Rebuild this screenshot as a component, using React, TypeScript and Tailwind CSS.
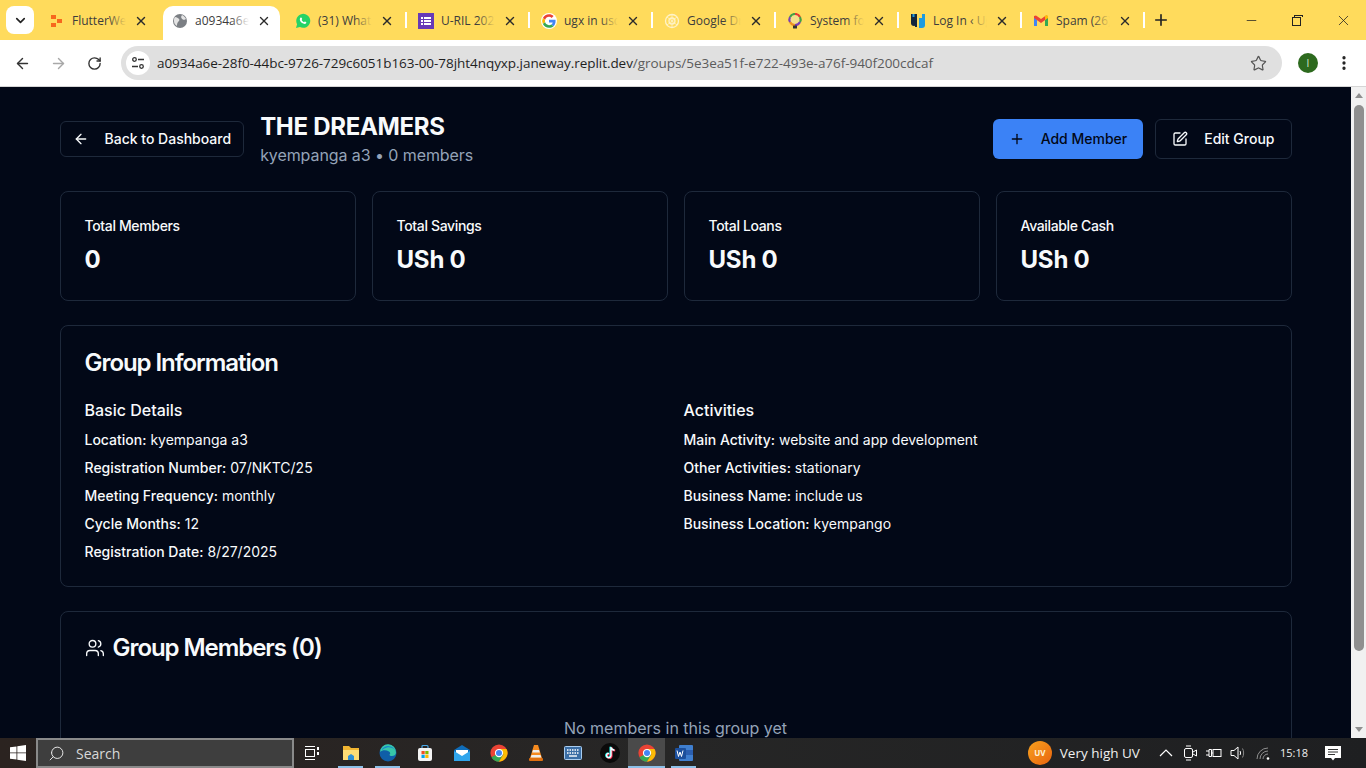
import React from "react";
import { ArrowLeft, ArrowRight, RotateCw, Star, Plus, SquarePen, Users, X, ChevronDown, Minus, EllipsisVertical, Search } from "lucide-react";

const Sq = ({ children, vb = "0 0 16 16" }: { children: React.ReactNode; vb?: string }) => (
  <svg width="16" height="16" viewBox={vb} className="shrink-0">{children}</svg>
);

const GoogleG = () => (
  <Sq vb="-4 -4 56 56">
    <path fill="#EA4335" d="M24 9.5c3.5 0 6.7 1.2 9.2 3.6l6.9-6.9C35.9 2.4 30.5 0 24 0 14.6 0 6.5 5.4 2.6 13.2l8 6.2C12.5 13.7 17.800 9.500 24 9.500z" />
    <path fill="#4285F4" d="M47 24.500c0-1.600-.1-3.100-.4-4.500H24v9h13c-.6 3-2.200 5.500-4.800 7.200l7.700 6C44.400 38.000 47 31.800 47 24.500z" />
    <path fill="#FBBC05" d="M10.500 28.600A14.500 14.500 0 0 1 10.500 19.400l-8-6.200a24 24 0 0 0 0 21.600z" />
    <path fill="#34A853" d="M24 48c6.500 0 11.900-2.100 15.900-5.800l-7.700-6c-2.200 1.400-4.900 2.300-8.200 2.300-6.200 0-11.500-4.200-13.400-9.900l-8 6.200C6.500 42.600 14.600 48 24 48z" />
  </Sq>
);

const tabIcons: Record<string, React.ReactNode> = {
  flutter: (
    <Sq>
      <rect x="2" y="2" width="5" height="4" fill="#f7671d" />
      <rect x="8" y="6" width="5" height="4" fill="#f7671d" />
      <rect x="2" y="10" width="5" height="4" fill="#f7671d" />
    </Sq>
  ),
  globe: (
    <Sq>
      <circle cx="8" cy="8" r="7" fill="#7b7f84" />
      <path d="M3 4c2 0 3 1 4 2s0 2-1 3-1 3-1 4c-2-1-3-3-3-5 0-2 0-3 1-4zM10 2c2 1 3 2 4 4l-2 1-2-1-1-2z" fill="#e4e4e4" />
    </Sq>
  ),
  whatsapp: (
    <Sq>
      <path d="M1 15l1.100-3.800A7 7 0 1 1 4.900 14z" fill="#25d366" />
      <path d="M5.700 4.500c.5-.3.900 0 1.100.6l.4.900-.6.900c.5 1 1.300 1.800 2.400 2.300l.8-.7 1.300.6c.3.200.3.700 0 1.100-.6.800-1.600.9-2.800.4-1.700-.7-3-2.100-3.400-3.700-.2-1 .1-1.800.8-2.400z" fill="#fff" />
    </Sq>
  ),
  forms: (
    <Sq>
      <rect x="0" y="0" width="16" height="16" fill="#673ab7" />
      <rect x="3" y="4" width="2" height="2" fill="#fff" />
      <rect x="6" y="4" width="7" height="2" fill="#fff" />
      <rect x="3" y="7" width="2" height="2" fill="#fff" />
      <rect x="6" y="7" width="7" height="2" fill="#fff" />
      <rect x="3" y="10" width="2" height="2" fill="#fff" />
      <rect x="6" y="10" width="7" height="2" fill="#fff" />
    </Sq>
  ),
  google: (
    <span className="flex h-4 w-4 items-center justify-center rounded-full bg-white">
      <GoogleG />
    </span>
  ),
  gpt: (
    <Sq>
      <circle cx="8" cy="8" r="6.500" fill="none" stroke="#fff3c8" strokeWidth="1.300" />
      <circle cx="8" cy="8" r="3" fill="none" stroke="#fff3c8" strokeWidth="1.300" />
      <path d="M3 4l10 8M13 4L3 12M8 1v14" stroke="#fff3c8" strokeWidth=".8" />
    </Sq>
  ),
  bulb: (
    <Sq>
      <circle cx="8" cy="6.500" r="5.500" fill="#f4e08a" />
      <path d="M8 1A5.500 5.500 0 0 1 13 4" fill="none" stroke="#e53935" strokeWidth="2.200" />
      <path d="M13 4A5.500 5.500 0 0 1 13 9" fill="none" stroke="#43a047" strokeWidth="2.200" />
      <path d="M13 9A5.500 5.500 0 0 1 8 12" fill="none" stroke="#7b3fb5" strokeWidth="2.200" />
      <path d="M8 12A5.500 5.500 0 0 1 3 9" fill="none" stroke="#f09020" strokeWidth="2.200" />
      <path d="M3 9A5.500 5.500 0 0 1 3 4" fill="none" stroke="#7b3fb5" strokeWidth="2.200" />
      <path d="M3 4A5.500 5.500 0 0 1 8 1" fill="none" stroke="#43a047" strokeWidth="2.200" />
      <rect x="6" y="12.500" width="4" height="3" rx=".5" fill="#333" />
    </Sq>
  ),
  login: (
    <Sq>
      <path d="M1 1h6v9a3 3 0 0 1-6 0z" fill="#14263c" />
      <rect x="5" y="1" width="2" height="13" fill="#14263c" />
      <path d="M9 1h6v11a3 3 0 0 1-3 3h-3z" fill="#1e9be0" />
      <path d="M9 1h3v4H9z" fill="#ffdb5c" />
      <path d="M2.500 1h2v3h-2z" fill="#1e9be0" />
    </Sq>
  ),
  gmail: (
    <Sq>
      <path d="M1 4v9h3V7z" fill="#4285f4" />
      <path d="M12 7v6h3V4z" fill="#34a853" />
      <path d="M1 3v2l7 5 7-5V3l-2-.5L8 6 3 2.500z" fill="#ea4335" />
      <path d="M12 3v4l3-2V3l-1.500-.8z" fill="#fbbc05" />
    </Sq>
  ),
};

const tabs = [
  { icon: "flutter", title: "FlutterWeb" },
  { icon: "globe", title: "a0934a6e-28f0", active: true },
  { icon: "whatsapp", title: "(31) WhatsApp" },
  { icon: "forms", title: "U-RIL 2025 form" },
  { icon: "google", title: "ugx in usd - Google" },
  { icon: "gpt", title: "Google Drive" },
  { icon: "bulb", title: "System for savings" },
  { icon: "login", title: "Log In ‹ Uganda" },
  { icon: "gmail", title: "Spam (26) - mail" },
];

function Tab({ icon, title, active, sep }: { icon: string; title: string; active?: boolean; sep: boolean }) {
  return (
    <div className="relative flex h-[34px] w-[123px] shrink-0 self-end">
      <div className={`flex h-[34px] w-[117px] items-center pb-[5px] pl-[9px] ${active ? "rounded-t-[10px] bg-white" : ""}`}>
        <span className="flex h-4 w-4 shrink-0 items-center justify-center">{tabIcons[icon]}</span>
        <span className="relative ml-[7px] w-[54px] shrink-0 overflow-hidden whitespace-nowrap text-[12px] text-[#3c3c3c]">
          {title}
          <span className={`absolute inset-y-0 right-0 w-[18px] bg-gradient-to-r from-transparent ${active ? "to-white" : "to-[#ffdb5c]"}`} />
        </span>
        <X size={14} strokeWidth={2.4} className="ml-2 shrink-0 text-[#2b2b2b]" />
      </div>
      {sep && <span className="absolute right-[2px] top-[6px] h-[16px] w-[2px] bg-white" />}
    </div>
  );
}

function BrowserChrome() {
  return (
    <div className="shrink-0 font-['Open_Sans',sans-serif]">
      <div className="flex h-10 items-stretch bg-[#ffdb5c]">
        <div className="flex w-[40px] shrink-0 items-start pl-[6px] pt-[6px]">
          <span className="flex h-[28px] w-[28px] items-center justify-center rounded-[8px] bg-white">
            <ChevronDown size={15} strokeWidth={2.6} className="text-[#222]" />
          </span>
        </div>
        {tabs.map((t, i) => (
          <Tab key={i} icon={t.icon} title={t.title} active={t.active} sep={i >= 2} />
        ))}
        <div className="flex h-10 w-[28px] shrink-0 items-center justify-center">
          <Plus size={18} strokeWidth={2.2} className="text-[#222]" />
        </div>
        <div className="ml-auto flex items-center">
          <span className="flex w-[46px] justify-center"><Minus size={15} strokeWidth={1.2} className="text-[#222]" /></span>
          <span className="relative h-[11px] w-[46px]">
            <span className="absolute left-[18px] top-[2px] h-[9px] w-[9px] border border-[#222]" />
            <span className="absolute left-[20px] top-0 h-[2px] w-[9px] border-l border-r border-t border-[#222]" />
          </span>
          <span className="flex w-[46px] justify-center"><X size={17} strokeWidth={1.1} className="text-[#222]" /></span>
        </div>
      </div>
      <div className="flex h-[47px] items-center rounded-t-[9px] border-b border-[#d5d5d5] bg-white">
        <span className="flex w-[44px] justify-center"><ArrowLeft size={17} strokeWidth={2} className="text-[#333]" /></span>
        <span className="flex w-[28px] justify-center"><ArrowRight size={17} strokeWidth={2} className="text-[#a8a8a8]" /></span>
        <span className="flex w-[44px] justify-center"><RotateCw size={15} strokeWidth={2.2} className="text-[#333]" /></span>
        <div className="ml-[5px] flex h-[34px] w-[1161px] items-center rounded-full bg-[#e0e0e0] pl-[5px] pr-[15px]">
          <span className="flex h-[24px] w-[24px] items-center justify-center rounded-full bg-white">
            <svg width="14" height="14" viewBox="0 0 14 14" fill="none" stroke="#333" strokeWidth="1.300">
              <circle cx="3.500" cy="3.500" r="1.800" />
              <path d="M7 3.500h6M1 10.500h6" />
              <circle cx="10.500" cy="10.500" r="1.800" />
            </svg>
          </span>
          <span className="ml-[7px] whitespace-nowrap text-[13.5px] tracking-[-0.05px] text-[#1f1f1f]">
            a0934a6e-28f0-44bc-9726-729c6051b163-00-78jht4nqyxp.janeway.replit.dev
            <span className="text-[#5c5c5c]">/groups/5e3ea51f-e722-493e-a76f-940f200cdcaf</span>
          </span>
          <Star size={17} strokeWidth={1.7} className="ml-auto text-[#555]" />
        </div>
        <span className="ml-[16px] flex h-5 w-5 items-center justify-center rounded-full bg-[#2d6a1e] text-[10px] text-[#d8e8d0]">I</span>
        <EllipsisVertical size={18} strokeWidth={2.4} className="ml-[17px] text-[#222]" />
      </div>
    </div>
  );
}

function Stat({ label, value }: { label: string; value: string }) {
  return (
    <div className="h-[110px] rounded-lg border border-[#1e293b] px-6 pt-6">
      <div className="text-sm font-medium leading-5 tracking-[-0.35px] text-[#f8fafc]">{label}</div>
      <div className="mt-2 text-2xl font-bold leading-8 tracking-[-0.2px] text-[#f8fafc]">{value}</div>
    </div>
  );
}

function Detail({ k, v }: { k: string; v: string }) {
  return (
    <p className="text-sm leading-5 text-[#f8fafc]">
      <span className="font-medium">{k}:</span> {v}
    </p>
  );
}

function Page() {
  return (
    <div className="flex min-h-0 flex-1 bg-[#020817]">
      <div className="min-w-0 flex-1 overflow-hidden font-['Inter',sans-serif]">
        <div className="mx-auto max-w-7xl px-6 pt-6">
          <div className="flex items-center justify-between">
            <div className="flex items-center gap-4">
              <button className="flex h-9 items-center gap-2 rounded-md border border-[#1e293b] pl-3 pr-3 text-sm font-medium text-[#f8fafc]">
                <ArrowLeft size={16} className="mr-2" strokeWidth={2} />
                Back to Dashboard
              </button>
              <div>
                <h1 className="text-2xl font-bold leading-8 tracking-[-0.3px] text-[#f8fafc]">THE DREAMERS</h1>
                <p className="text-base leading-6 tracking-[-0.08px] text-[#94a3b8]">kyempanga a3 • 0 members</p>
              </div>
            </div>
            <div className="flex items-center gap-3">
              <button className="flex h-10 items-center rounded-md bg-[#3b82f6] px-4 text-sm font-medium text-[#020817]">
                <Plus size={16} className="mr-4" strokeWidth={2} />
                Add Member
              </button>
              <button className="flex h-10 items-center rounded-md border border-[#1e293b] px-4 text-sm font-medium text-[#f8fafc]">
                <SquarePen size={16} className="mr-4" strokeWidth={2} />
                Edit Group
              </button>
            </div>
          </div>

          <div className="mt-6 grid grid-cols-4 gap-4">
            <Stat label="Total Members" value="0" />
            <Stat label="Total Savings" value="USh 0" />
            <Stat label="Total Loans" value="USh 0" />
            <Stat label="Available Cash" value="USh 0" />
          </div>

          <div className="mt-6 h-[262px] rounded-lg border border-[#1e293b] p-6">
            <h2 className="text-2xl font-semibold leading-[25px] tracking-[-1.05px] text-[#f8fafc]">Group Information</h2>
            <div className="mt-[21px] grid grid-cols-2 gap-4">
              <div>
                <h3 className="mb-[6px] text-base font-medium leading-7 text-[#f8fafc]">Basic Details</h3>
                <div className="flex flex-col gap-2">
                  <Detail k="Location" v="kyempanga a3" />
                  <Detail k="Registration Number" v="07/NKTC/25" />
                  <Detail k="Meeting Frequency" v="monthly" />
                  <Detail k="Cycle Months" v="12" />
                  <Detail k="Registration Date" v="8/27/2025" />
                </div>
              </div>
              <div>
                <h3 className="mb-[6px] text-base font-medium leading-7 text-[#f8fafc]">Activities</h3>
                <div className="flex flex-col gap-2">
                  <Detail k="Main Activity" v="website and app development" />
                  <Detail k="Other Activities" v="stationary" />
                  <Detail k="Business Name" v="include us" />
                  <Detail k="Business Location" v="kyempango" />
                </div>
              </div>
            </div>
          </div>

          <div className="mt-6 h-[260px] rounded-lg border border-[#1e293b] p-6">
            <div className="flex items-center gap-2">
              <Users size={20} strokeWidth={1.6} className="text-[#f8fafc]" />
              <h2 className="text-2xl font-semibold leading-6 tracking-[-1.05px] text-[#f8fafc]">Group Members (0)</h2>
            </div>
            <p className="mt-14 text-center text-base leading-6 text-[#94a3b8]">No members in this group yet</p>
          </div>
        </div>
      </div>
      <div className="flex w-[15px] shrink-0 flex-col items-center bg-[#f1f1f1] pt-[5px]">
        <svg width="10" height="7" viewBox="0 0 10 7" className="shrink-0"><path d="M5 1l4 5H1z" fill="#8f8f8f" /></svg>
        <div className="mt-[6px] h-[546px] w-[10px] shrink-0 rounded-full bg-[#8f8f8f]" />
        <svg width="10" height="7" viewBox="0 0 10 7" className="mt-[75px] shrink-0"><path d="M5 6L1 1h8z" fill="#8f8f8f" /></svg>
      </div>
    </div>
  );
}

const Tb = ({ children, active, line }: { children: React.ReactNode; active?: boolean; line?: boolean }) => (
  <div className={`relative flex h-[30px] w-[37px] shrink-0 items-center justify-center ${active ? "bg-[#4a4a4a]" : ""}`}>
    {children}
    {line && <span className={`absolute bottom-0 h-[2px] bg-[#8cc0e8] ${active ? "inset-x-0" : "inset-x-[6px]"}`} />}
  </div>
);

const Chrome = () => (
  <svg width="18" height="18" viewBox="0 0 48 48">
    <circle cx="24" cy="24" r="23" fill="#ea4335" />
    <path d="M24 24L4 35A23 23 0 0 0 24 47l12-20z" fill="#34a853" />
    <path d="M24 13h20a23 23 0 0 1-20 34l12-20z" fill="#fbbc05" />
    <circle cx="24" cy="24" r="11" fill="#fff" />
    <circle cx="24" cy="24" r="8" fill="#4285f4" />
  </svg>
);

function Taskbar() {
  return (
    <div className="flex h-[30px] shrink-0 items-center bg-gradient-to-r from-[#2b2320] via-[#262626] to-[#1e1f21] font-['Open_Sans',sans-serif] text-white">
      <div className="flex h-[30px] w-[36px] shrink-0 items-center justify-center">
        <svg width="16" height="16" viewBox="0 0 16 16" fill="#fff">
          <path d="M0 2.300l6.500-.9v6.100H0zM7.300 1.300L16 0v7.500H7.300zM0 8.300h6.500v6.200L0 13.700zM7.300 8.300H16V16l-8.700-1.200z" />
        </svg>
      </div>
      <div className="flex h-[30px] w-[258px] shrink-0 items-center border-2 border-[#8a8a8a] bg-[#3e3e3e] pl-[10px]">
        <Search size={17} strokeWidth={1.4} className="-scale-x-100 text-[#e6e6e6]" />
        <span className="ml-[11px] text-[14px] text-[#d8d8d8]">Search</span>
      </div>
      <div className="flex h-[30px] w-[35px] shrink-0 items-center justify-center">
        <svg width="16" height="16" viewBox="0 0 16 16" fill="none" stroke="#fff" strokeWidth="1">
          <rect x="1.500" y="4.500" width="9" height="7" />
          <path d="M1 1.500h10M1 14.500h10" />
          <path d="M14 2v3M14 7v3" strokeWidth="2" />
        </svg>
      </div>
      <div className="flex pl-[3px]">
        <Tb line>
          <svg width="18" height="18" viewBox="0 0 18 18">
            <path d="M1 2h6l2 2h8v12H1z" fill="#f2b632" />
            <rect x="1" y="6" width="16" height="10" fill="#ffdd75" />
            <path d="M6 16v-4l3-2 3 2v4z" fill="#2f8fd6" />
          </svg>
        </Tb>
        <Tb line>
          <svg width="18" height="18" viewBox="0 0 18 18">
            <circle cx="9" cy="9" r="8.500" fill="#0f5ea8" />
            <path d="M1 8a8 8 0 0 1 16 .5c0 2.500-2 3.500-4 3.500-1.500 0-2.500-.5-2.500-1.500 1-.5 1-2-.5-3C7 5.500 3 6 1 8z" fill="#37c6a8" />
            <path d="M3 5a8 8 0 0 1 13 1c-2-2-5-3-8-2.500C6 4 4 5 3 6z" fill="#1784d0" />
          </svg>
        </Tb>
        <Tb>
          <svg width="18" height="18" viewBox="0 0 18 18">
            <path d="M6 4V2.500a1 1 0 0 1 1-1h4a1 1 0 0 1 1 1V4" fill="none" stroke="#4aa8e8" strokeWidth="1.200" />
            <rect x="2" y="4" width="14" height="13" rx="2" fill="#f4f4f4" />
            <rect x="5.500" y="7" width="3.200" height="3.200" fill="#f25022" />
            <rect x="9.300" y="7" width="3.200" height="3.200" fill="#7fba00" />
            <rect x="5.500" y="10.800" width="3.200" height="3.200" fill="#00a4ef" />
            <rect x="9.300" y="10.800" width="3.200" height="3.200" fill="#ffb900" />
          </svg>
        </Tb>
        <Tb>
          <svg width="18" height="18" viewBox="0 0 18 18">
            <path d="M1 6l8-5 8 5v11H1z" fill="#0f6cb8" />
            <path d="M3 6h12v4l-6 3-6-3z" fill="#fff" />
            <path d="M1 7l8 5 8-5v10H1z" fill="#2fa5ec" />
          </svg>
        </Tb>
        <Tb><Chrome /></Tb>
        <Tb>
          <svg width="16" height="18" viewBox="0 0 16 18">
            <path d="M6 1h4l4 13H2z" fill="#f58a1f" />
            <path d="M5 6h6l.8 2.500H4.200zM3.500 11h9l.8 2.500H2.700z" fill="#eee" />
            <rect x="1" y="14" width="14" height="3" rx="1" fill="#e07010" />
          </svg>
        </Tb>
        <Tb>
          <svg width="18" height="14" viewBox="0 0 18 14">
            <rect x=".5" y=".5" width="17" height="13" rx="1" fill="#3b6ea5" stroke="#a9cdf0" />
            <path d="M3 4h12M3 7h12" stroke="#fff" strokeWidth="1.400" strokeDasharray="1.500 1" />
            <path d="M5 10h8" stroke="#fff" strokeWidth="1.400" />
          </svg>
        </Tb>
        <Tb>
          <svg width="20" height="20" viewBox="0 0 20 20">
            <circle cx="10" cy="10" r="10" fill="#0a0a0a" />
            <path d="M11 4v8.500a2.200 2.200 0 1 1-2-2.200M11 4c.3 2 1.500 3 3.500 3.200" fill="none" stroke="#ff2d55" strokeWidth="1.700" transform="translate(.7 .5)" />
            <path d="M11 4v8.500a2.200 2.200 0 1 1-2-2.200M11 4c.3 2 1.500 3 3.500 3.200" fill="none" stroke="#25f4ee" strokeWidth="1.700" transform="translate(-.7 -.3)" />
            <path d="M11 4v8.500a2.200 2.200 0 1 1-2-2.200M11 4c.3 2 1.500 3 3.500 3.200" fill="none" stroke="#fff" strokeWidth="1.300" />
          </svg>
        </Tb>
        <Tb active line><Chrome /></Tb>
        <Tb line>
          <svg width="20" height="18" viewBox="0 0 20 18">
            <rect x="5" y="1" width="14" height="16" rx="1" fill="#3f7fd0" />
            <rect x="5" y="6" width="14" height="5" fill="#2b5fb0" />
            <rect x="1" y="4" width="11" height="11" rx="1" fill="#1c4f9c" />
            <path d="M3 6.500l1.500 6 1.500-4.500 1.500 4.500 1.500-6" fill="none" stroke="#fff" strokeWidth="1" />
          </svg>
        </Tb>
      </div>
      <div className="ml-auto flex items-center">
        <span className="flex h-6 w-6 items-center justify-center rounded-full bg-gradient-to-br from-[#f7a11e] to-[#e8620e] text-[8px] font-bold text-[#fff3d8]">UV</span>
        <span className="ml-2 text-[13.5px] text-[#f0f0f0]">Very high UV</span>
        <svg width="14" height="8" viewBox="0 0 14 8" className="ml-[19px]" fill="none" stroke="#fff" strokeWidth="1.200"><path d="M1 7l6-6 6 6" /></svg>
        <svg width="13" height="16" viewBox="0 0 13 16" className="ml-[11px]" fill="none" stroke="#fff" strokeWidth="1">
          <rect x=".5" y="3.500" width="8" height="9" rx="1.500" />
          <path d="M9 7l3.500-2v6L9 9M2 1h5M2 15h5" />
        </svg>
        <svg width="16" height="12" viewBox="0 0 16 12" className="ml-[9px]" fill="none" stroke="#fff" strokeWidth="1">
          <path d="M0 4h3M0 8h3M3 2.500h2.500v7H3zM5.500 6H7" />
          <rect x="7" y="2.500" width="8" height="7" />
        </svg>
        <svg width="16" height="14" viewBox="0 0 16 14" className="ml-[8px]" fill="none" stroke="#fff" strokeWidth="1">
          <path d="M1 4.500h3L8 1v12L4 9.500H1z" />
          <path d="M10 5c.7 1 .7 3 0 4" />
          <path d="M12.500 2.500c1.500 2.500 1.500 6.500 0 9" stroke="#8a8a8a" />
        </svg>
        <svg width="14" height="13" viewBox="0 0 14 13" className="ml-[10px]" fill="none" stroke="#8f8f8f" strokeWidth="1">
          <path d="M1 12A11 11 0 0 1 12 1M4 12a8 8 0 0 1 8-8M7 12a5 5 0 0 1 5-5" />
          <circle cx="12" cy="11.500" r="1.300" fill="#fff" stroke="none" />
        </svg>
        <span className="ml-[10px] text-[11px] text-[#f0f0f0]">15:18</span>
        <svg width="16" height="15" viewBox="0 0 16 15" className="ml-[17px] mr-[25px]" fill="#fff">
          <path d="M0 0h16v12H10l-2 2.500L6 12H0z" />
          <path d="M3 3.500h10M3 6h10M3 8.500h7" stroke="#333" strokeWidth="1" />
        </svg>
      </div>
    </div>
  );
}

export default function App() {
  return (
    <div className="flex h-screen w-full flex-col overflow-hidden">
      <BrowserChrome />
      <Page />
      <Taskbar />
    </div>
  );
}
